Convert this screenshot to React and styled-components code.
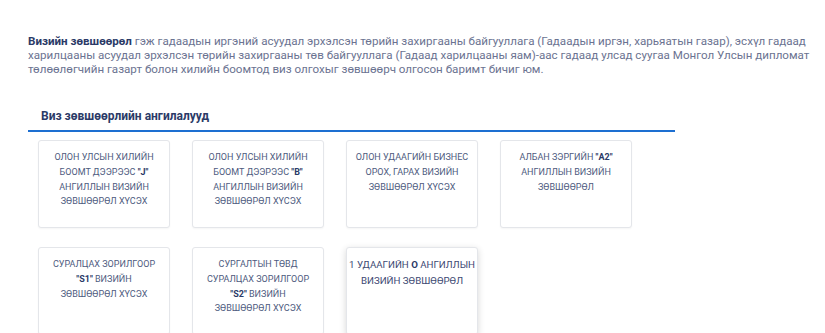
import React from 'react';
import styled, { createGlobalStyle } from 'styled-components';

const COLORS = {
  text: '#6b7391',
  navy: '#2b3a67',
  cardText: '#4d5a7e',
  blue: '#1d6fd1',
  border: '#e4e6ea',
};

const GlobalStyle = createGlobalStyle`
  body {
    margin: 0;
    background: #fff;
    font-family: 'Roboto', 'Noto Sans', sans-serif;
  }
`;

const Page = styled.div`
  padding: 34px 0 0 28px;
`;

const Intro = styled.p`
  margin: 0;
  font-size: 11.6px;
  line-height: 14px;
  color: ${COLORS.text};
  white-space: nowrap;

  strong {
    color: ${COLORS.navy};
    font-weight: 700;
  }
`;

const Section = styled.section`
  margin-top: 32px;
  width: 647px;
`;

const SectionTitle = styled.h3`
  margin: 0;
  padding: 0 0 6px 13px;
  font-size: 12px;
  line-height: 16px;
  font-weight: 700;
  color: ${COLORS.navy};
  border-bottom: 2px solid ${COLORS.blue};
`;

const Grid = styled.div`
  display: grid;
  grid-template-columns: repeat(4, 132px);
  column-gap: 22px;
  row-gap: 19px;
  padding: 8px 0 0 10px;
`;

const Card = styled.div`
  height: 88px;
  box-sizing: border-box;
  padding: ${(p) => (p.$active ? '9px 0' : '9px 4px')};
  border: 1px solid ${COLORS.border};
  border-radius: 3px;
  background: #fff;
  box-shadow: ${(p) =>
    p.$active ? '0 2px 7px rgba(0, 0, 0, 0.16)' : '0 1px 2px rgba(0, 0, 0, 0.04)'};
  text-align: center;
  white-space: nowrap;
  font-size: ${(p) => (p.$active ? '9.7px' : '9px')};
  line-height: ${(p) => (p.$active ? '16px' : '14.8px')};
  color: ${(p) => (p.$active ? '#3c4872' : COLORS.cardText)};
  text-transform: uppercase;
  cursor: pointer;

  b {
    color: ${COLORS.navy};
    font-weight: 700;
  }
`;

const cards = [
  { lines: ['ОЛОН УЛСЫН ХИЛИЙН', <>БООМТ ДЭЭРЭЭС <b>"J"</b></>, 'АНГИЛЛЫН ВИЗИЙН', 'ЗӨВШӨӨРӨЛ ХҮСЭХ'] },
  { lines: ['ОЛОН УЛСЫН ХИЛИЙН', <>БООМТ ДЭЭРЭЭС <b>"B"</b></>, 'АНГИЛЛЫН ВИЗИЙН', 'ЗӨВШӨӨРӨЛ ХҮСЭХ'] },
  { lines: ['ОЛОН УДААГИЙН БИЗНЕС', 'ОРОХ, ГАРАХ ВИЗИЙН', 'ЗӨВШӨӨРӨЛ ХҮСЭХ'] },
  { lines: [<>АЛБАН ЗЭРГИЙН <b>"A2"</b></>, 'АНГИЛЛЫН ВИЗИЙН', 'ЗӨВШӨӨРӨЛ'] },
  { lines: ['СУРАЛЦАХ ЗОРИЛГООР', <><b>"S1"</b> ВИЗИЙН</>, 'ЗӨВШӨӨРӨЛ ХҮСЭХ'] },
  { lines: ['СУРГАЛТЫН ТӨВД', 'СУРАЛЦАХ ЗОРИЛГООР', <><b>"S2"</b> ВИЗИЙН</>, 'ЗӨВШӨӨРӨЛ ХҮСЭХ'] },
  { lines: [<>1 УДААГИЙН <b>О</b> АНГИЛЛЫН</>, 'ВИЗИЙН ЗӨВШӨӨРӨЛ'], active: true },
];

const App = () => (
  <>
    <GlobalStyle />
    <Page>
      <Intro>
        <strong>Визийн зөвшөөрөл</strong> гэж гадаадын иргэний асуудал эрхэлсэн төрийн захиргааны
        байгууллага (Гадаадын иргэн, харьяатын газар), эсхүл гадаад
        <br />
        харилцааны асуудал эрхэлсэн төрийн захиргааны төв байгууллага (Гадаад харилцааны яам)-аас
        гадаад улсад суугаа Монгол Улсын дипломат
        <br />
        төлөөлөгчийн газарт болон хилийн боомтод виз олгохыг зөвшөөрч олгосон баримт бичиг юм.
      </Intro>
      <Section>
        <SectionTitle>Виз зөвшөөрлийн ангилалууд</SectionTitle>
        <Grid>
          {cards.map((card, i) => (
            <Card key={i} $active={card.active}>
              {card.lines.map((line, j) => (
                <div key={j}>{line}</div>
              ))}
            </Card>
          ))}
        </Grid>
      </Section>
    </Page>
  </>
);

export default App;
